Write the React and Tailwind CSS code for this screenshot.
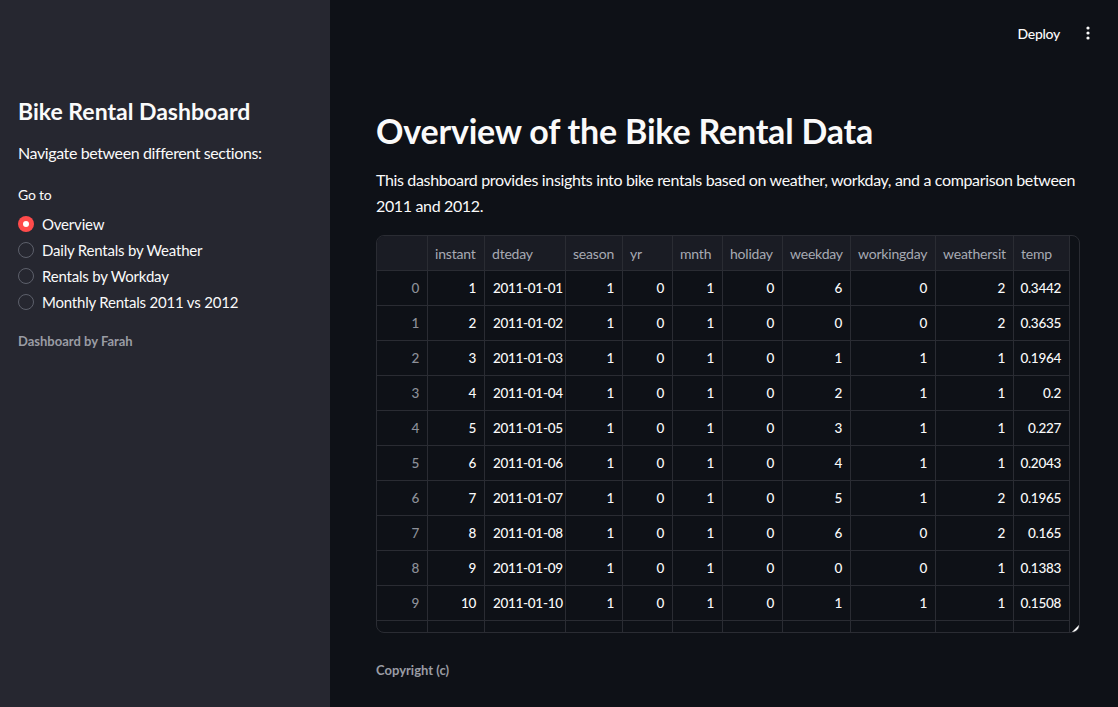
import React from 'react';

const COLS = ['', 'instant', 'dteday', 'season', 'yr', 'mnth', 'holiday', 'weekday', 'workingday', 'weathersit', 'temp'];

const ROWS = [
  [0, 1, '2011-01-01', 1, 0, 1, 0, 6, 0, 2, '0.3442'],
  [1, 2, '2011-01-02', 1, 0, 1, 0, 0, 0, 2, '0.3635'],
  [2, 3, '2011-01-03', 1, 0, 1, 0, 1, 1, 1, '0.1964'],
  [3, 4, '2011-01-04', 1, 0, 1, 0, 2, 1, 1, '0.2'],
  [4, 5, '2011-01-05', 1, 0, 1, 0, 3, 1, 1, '0.227'],
  [5, 6, '2011-01-06', 1, 0, 1, 0, 4, 1, 1, '0.2043'],
  [6, 7, '2011-01-07', 1, 0, 1, 0, 5, 1, 2, '0.1965'],
  [7, 8, '2011-01-08', 1, 0, 1, 0, 6, 0, 2, '0.165'],
  [8, 9, '2011-01-09', 1, 0, 1, 0, 0, 0, 1, '0.1383'],
  [9, 10, '2011-01-10', 1, 0, 1, 0, 1, 1, 1, '0.1508'],
  ['', '', '', '', '', '', '', '', '', '', ''],
];

const NAV = ['Overview', 'Daily Rentals by Weather', 'Rentals by Workday', 'Monthly Rentals 2011 vs 2012'];

const gridCols = 'grid grid-cols-[51px_57px_81px_57px_50px_50px_60px_68px_85px_78px_56px]';

function Radio({ label, selected }) {
  return (
    <div className="flex items-center h-[26px]">
      {selected ? (
        <span className="w-4 h-4 rounded-full bg-[#ff4b4b] flex items-center justify-center mr-2">
          <span className="w-1.5 h-1.5 rounded-full bg-white" />
        </span>
      ) : (
        <span className="w-4 h-4 rounded-full border border-[#5d606b] mr-2" />
      )}
      <span className="text-[15px] tracking-[-0.2px] text-[#fafafa]">{label}</span>
    </div>
  );
}

function DataTable() {
  return (
    <div className="mt-[16px] relative w-[704px] h-[398px] border border-[#2a2c33] rounded-lg overflow-hidden">
      {/* header */}
      <div className={`${gridCols} h-[35px] bg-[#1a1c24] text-[14px] tracking-[-0.2px] text-[#a7aab3] w-[693px]`}>
        {COLS.map((c, i) => (
          <div key={i} className="border-r border-b border-[#2a2c33] flex items-center px-[7px] whitespace-nowrap">
            {c}
          </div>
        ))}
      </div>
      {ROWS.map((r, ri) => (
        <div key={ri} className={`${gridCols} h-[35px] text-[13.5px] font-medium tracking-[-0.3px] w-[693px]`}>
          {r.map((v, ci) => (
            <div
              key={ci}
              className={`border-r border-b border-[#2a2c33] flex items-center px-[8px] whitespace-nowrap ${
                ci === 2 ? 'justify-start' : 'justify-end'
              } ${ci === 0 ? 'text-[#8d9099]' : 'text-[#fafafa]'}`}
            >
              {v}
            </div>
          ))}
        </div>
      ))}
      <div className="absolute right-0 bottom-0 w-0 h-0 border-l-[7px] border-l-transparent border-b-[7px] border-b-white" />
    </div>
  );
}

export default function App() {
  return (
    <div
      className="flex w-[1118px] h-[707px] overflow-hidden bg-[#0e1117] text-[#fafafa]"
      style={{ fontFamily: 'Lato, "Noto Sans", sans-serif' }}
    >
      {/* Sidebar */}
      <aside className="w-[330px] shrink-0 bg-[#262730] px-[18px] pt-[96px]">
        <h2 className="text-[23px] font-bold leading-[30px]">Bike Rental Dashboard</h2>
        <p className="mt-[14px] text-[16px] leading-[26px] tracking-[-0.4px]">Navigate between different sections:</p>
        <div className="mt-[20px] text-[14px] leading-[18px] tracking-[-0.2px]">Go to</div>
        <div className="mt-[7px] flex flex-col">
          {NAV.map((n, i) => (
            <Radio key={n} label={n} selected={i === 0} />
          ))}
        </div>
        <div className="mt-[17px] text-[13px] font-bold text-[#9a9ca4]">Dashboard by Farah</div>
      </aside>

      {/* Main */}
      <main className="flex-1 flex flex-col">
        <header className="h-[66px] flex items-center justify-end pr-[28px] gap-[26px]">
          <span className="text-[14px] font-medium tracking-[-0.3px]">Deploy</span>
          <svg width="4" height="14" viewBox="0 0 4 14" className="fill-[#fafafa]">
            <circle cx="2" cy="2" r="1.6" />
            <circle cx="2" cy="7" r="1.6" />
            <circle cx="2" cy="12" r="1.6" />
          </svg>
        </header>
        <div className="pl-[46px] pt-[44px]">
          <h1 className="text-[34px] font-bold leading-[42px] tracking-[-0.2px]">Overview of the Bike Rental Data</h1>
          <p className="mt-[15px] w-[706px] text-[16px] leading-[26px] tracking-[-0.35px]">
            This dashboard provides insights into bike rentals based on weather, workday, and a comparison between 2011 and 2012.
          </p>
          <DataTable />
          <div className="mt-[28px] text-[13px] font-bold text-[#9a9ca4]">Copyright (c)</div>
        </div>
      </main>
    </div>
  );
}
